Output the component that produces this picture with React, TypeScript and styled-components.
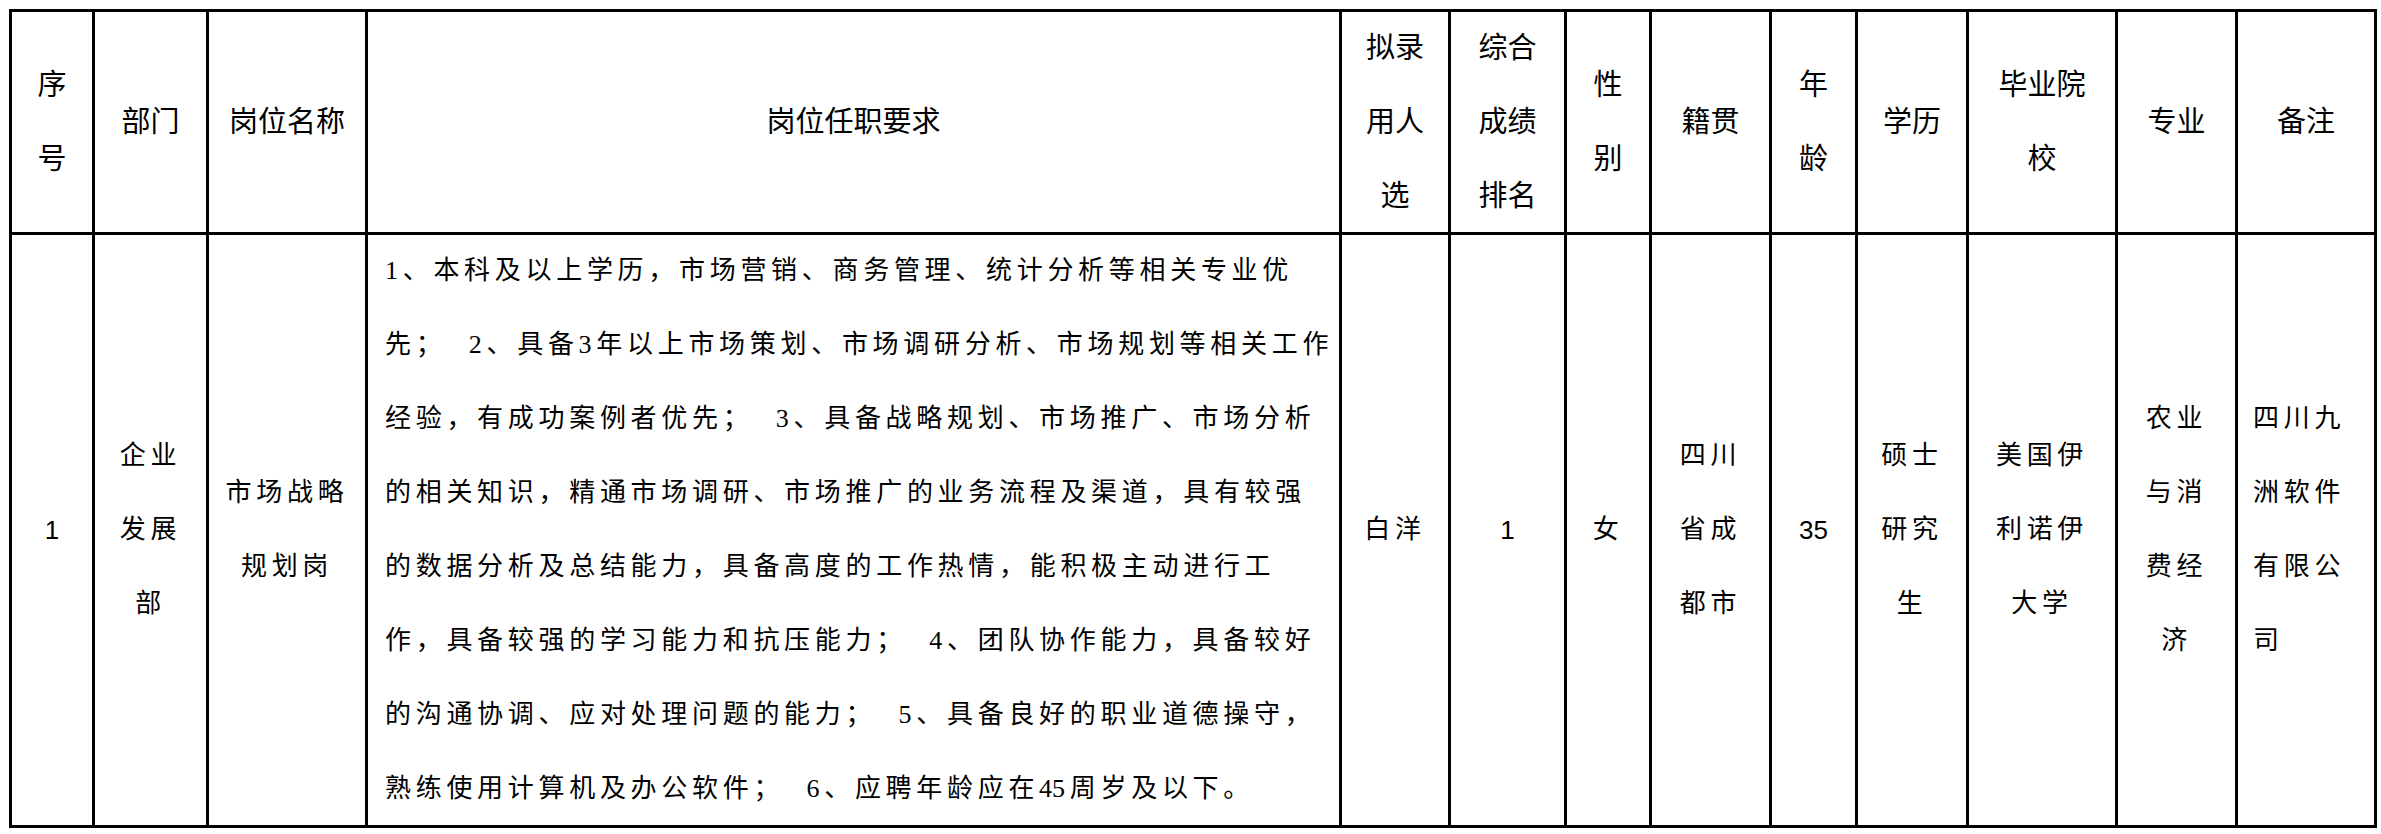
import React from "react";
import styled, { createGlobalStyle, css } from "styled-components";

const GlobalStyle = createGlobalStyle`
  html, body {
    margin: 0;
    padding: 0;
    background: #ffffff;
  }
  body {
    font-family: "Liberation Serif", "Noto Sans CJK SC", serif;
    color: #000000;
  }
`;

type Align = "left" | "center";

interface IColumn {
  width: number;
  head: string[];
  body: string[];
  align?: Align;
  numeric?: boolean;
  indent?: number;
}

const columns: IColumn[] = [
  { width: 80, head: ["序", "号"], body: ["1"], numeric: true },
  { width: 111, head: ["部门"], body: ["企业", "发展", "部"] },
  { width: 156, head: ["岗位名称"], body: ["市场战略", "规划岗"] },
  {
    width: 971,
    head: ["岗位任职要求"],
    align: "left",
    indent: 17,
    body: [
      "1、本科及以上学历，市场营销、商务管理、统计分析等相关专业优",
      "先；  2、具备3年以上市场策划、市场调研分析、市场规划等相关工作",
      "经验，有成功案例者优先；  3、具备战略规划、市场推广、市场分析",
      "的相关知识，精通市场调研、市场推广的业务流程及渠道，具有较强",
      "的数据分析及总结能力，具备高度的工作热情，能积极主动进行工",
      "作，具备较强的学习能力和抗压能力；  4、团队协作能力，具备较好",
      "的沟通协调、应对处理问题的能力；  5、具备良好的职业道德操守，",
      "熟练使用计算机及办公软件；  6、应聘年龄应在45周岁及以下。",
    ],
  },
  { width: 106, head: ["拟录", "用人", "选"], body: ["白洋"] },
  { width: 113, head: ["综合", "成绩", "排名"], body: ["1"], numeric: true },
  { width: 82, head: ["性", "别"], body: ["女"] },
  { width: 117, head: ["籍贯"], body: ["四川", "省成", "都市"] },
  { width: 83, head: ["年", "龄"], body: ["35"], numeric: true },
  { width: 108, head: ["学历"], body: ["硕士", "研究", "生"] },
  { width: 146, head: ["毕业院", "校"], body: ["美国伊", "利诺伊", "大学"] },
  { width: 117, head: ["专业"], body: ["农业", "与消", "费经", "济"] },
  {
    width: 136,
    head: ["备注"],
    align: "left",
    indent: 15,
    body: ["四川九", "洲软件", "有限公", "司"],
  },
];

const Sheet = styled.div<{ $cols: string }>`
  display: grid;
  grid-template-columns: ${({ $cols }) => $cols};
  grid-template-rows: 220px 590px;
  gap: 3px;
  padding: 3px;
  background: #000000;
  width: max-content;
  margin: 9px 0 0 9px;
`;

const Cell = styled.div<{ $align?: Align; $indent?: number }>`
  background: #ffffff;
  display: flex;
  flex-direction: column;
  justify-content: center;
  align-items: ${({ $align }) => ($align === "left" ? "flex-start" : "center")};
  padding-left: ${({ $indent }) => $indent ?? 0}px;
  overflow: hidden;
`;

const HeadLine = styled.div`
  font-size: 29px;
  line-height: 74px;
  white-space: nowrap;
`;

const BodyLine = styled.div<{ $numeric?: boolean }>`
  font-size: 26px;
  line-height: 74px;
  letter-spacing: 4.7px;
  white-space: pre;
  ${({ $numeric }) =>
    $numeric &&
    css`
      font-family: "Liberation Sans", "Noto Sans CJK SC", sans-serif;
      letter-spacing: 0;
    `}
`;

const Digits = styled.span`
  letter-spacing: 0;
  margin-right: 4.7px;
`;

const renderText = (line: string) =>
  line.split(/(\d{2,})/).map((part, k) =>
    /^\d{2,}$/.test(part) ? <Digits key={k}>{part}</Digits> : part
  );

const App: React.FC = () => {
  const template = columns.map((c) => `${c.width}px`).join(" ");

  return (
    <>
      <GlobalStyle />
      <Sheet $cols={template}>
        {columns.map((col, i) => (
          <Cell key={`h${i}`}>
            {col.head.map((line) => (
              <HeadLine key={line}>{line}</HeadLine>
            ))}
          </Cell>
        ))}
        {columns.map((col, i) => (
          <Cell key={`b${i}`} $align={col.align} $indent={col.indent}>
            {col.body.map((line, j) => (
              <BodyLine key={j} $numeric={col.numeric}>
                {col.numeric ? line : renderText(line)}
              </BodyLine>
            ))}
          </Cell>
        ))}
      </Sheet>
    </>
  );
};

export default App;
